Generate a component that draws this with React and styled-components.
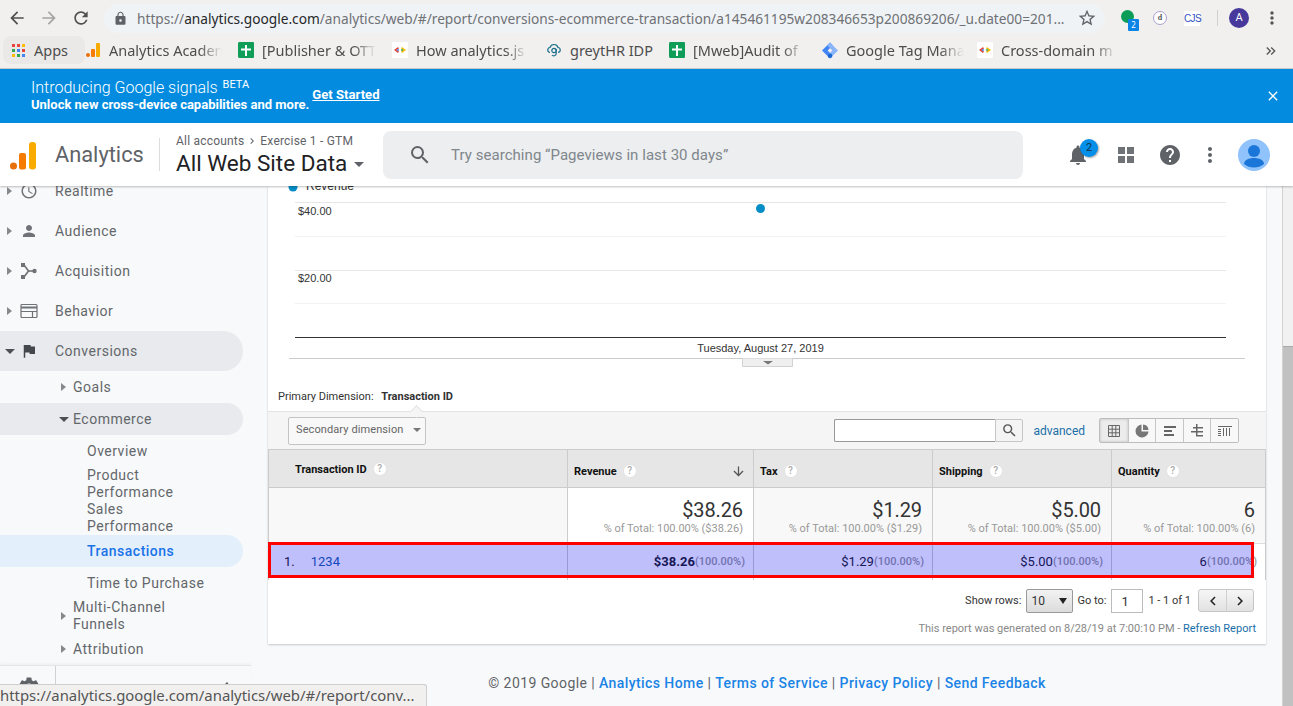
import React from 'react';
import styled, { createGlobalStyle } from 'styled-components';
import {
    MdArrowBack, MdArrowForward, MdRefresh, MdLock, MdStarBorder, MdSearch, MdClose,
    MdNotifications, MdHelp, MdMoreVert, MdAccessTime, MdPerson, MdFlag, MdSettings,
    MdChevronLeft, MdChevronRight, MdArrowDownward, MdKeyboardDoubleArrowRight
} from 'react-icons/md';

const GlobalStyle = createGlobalStyle`
    html, body {
        margin: 0;
        padding: 0;
        height: 100%;
        overflow: hidden;
        background: #f8f9fa;
        font-family: Roboto, "Liberation Sans", sans-serif;
    }
    * { box-sizing: border-box; }
`

const Page = styled.div`
    width: 1293px;
    height: 706px;
    display: flex;
    flex-direction: column;
    overflow: hidden;
    position: relative;
`

/* browser chrome */
const Chrome = styled.div`
    height: 69px;
    flex: none;
    background: #f1f0ef;
    border-bottom: 1px solid #c9c9c9;
    font-family: "Noto Sans", sans-serif;
`

const Toolbar = styled.div`
    height: 36px;
    display: flex;
    align-items: center;
    padding-left: 1px;
    color: #5a5a5a;
`

const NavButton = styled.div`
    width: 32px;
    display: flex;
    justify-content: center;
    font-size: 20px;
    color: ${({dim}) => dim ? '#a4a4a4' : '#505050'};
`

const Omnibox = styled.div`
    width: 1001px;
    height: 29px;
    margin-left: 7px;
    padding: 0 8px 0 9px;
    border-radius: 15px;
    background: #f0f3f5;
    display: flex;
    align-items: center;
    color: #5f6368;
    font-size: 13.7px;
    svg { flex: none; }
`

const Url = styled.span`
    margin-left: 9px;
    flex: 1;
    white-space: nowrap;
    color: #6e7175;
    b { font-weight: 400; color: #26282a; }
`

const Extensions = styled.div`
    display: flex;
    align-items: center;
    margin-left: 12px;
`

const ExtDot = styled.div`
    position: relative;
    width: 13px;
    height: 13px;
    border-radius: 50%;
    background: #0b9d58;
    margin: -3px 0 0 4px;
`

const ExtBadge = styled.span`
    position: absolute;
    left: 7px;
    top: 9px;
    width: 11px;
    height: 12px;
    border-radius: 1px;
    background: #0a84e6;
    color: #fff;
    font-size: 8px;
    line-height: 12px;
    text-align: center;
`

const ExtRing = styled.div`
    width: 14px;
    height: 14px;
    margin-left: 19px;
    border: 1px solid #a89fd0;
    border-radius: 50%;
    background: #fff;
    color: #555;
    font: bold 8px/12px "Liberation Serif", serif;
    text-align: center;
`

const ExtLabel = styled.div`
    width: 16px;
    margin-left: 17px;
    background: #fff;
    color: #3552c0;
    font: 10px/15px "Liberation Sans", sans-serif;
    letter-spacing: -0.6px;
    text-align: center;
`

const ToolbarDivider = styled.div`
    width: 1px;
    height: 16px;
    margin-left: 17px;
    background: #d0d0d0;
`

const ProfileBadge = styled.div`
    width: 20px;
    height: 20px;
    margin-left: 11px;
    border-radius: 50%;
    background: #47399b;
    color: #fff;
    font: 11px/20px Roboto, sans-serif;
    text-align: center;
`

const ChromeMenu = styled.div`
    margin-left: 13px;
    width: 20px;
    font-size: 20px;
    display: flex;
    color: #555;
`

const Bookmarks = styled.div`
    height: 32px;
    display: flex;
    align-items: center;
    padding: 0 0 5px 3px;
    position: relative;
    font-size: 14.5px;
    color: #4d4d4d;
`

const Bookmark = styled.div`
    width: ${({w}) => w}px;
    flex: none;
    display: flex;
    align-items: center;
    height: 28px;
    padding-left: ${({pad}) => pad || 0}px;
    border-radius: 8px;
    background: ${({active}) => active ? '#ebe9e8' : 'transparent'};
    overflow: hidden;
`

const BookmarkIcon = styled.span`
    width: 16px;
    height: 16px;
    flex: none;
    margin-right: 8px;
    display: flex;
`

const BookmarkText = styled.span`
    white-space: nowrap;
    overflow: hidden;
    width: ${({w}) => w ? w + 'px' : 'auto'};
    -webkit-mask-image: ${({w}) => w ? 'linear-gradient(to right, #000 80%, transparent)' : 'none'};
`

const MoreBookmarks = styled.div`
    position: absolute;
    right: 14px;
    top: 7px;
    font-size: 16px;
    display: flex;
    color: #555;
`

/* banner */
const Banner = styled.div`
    height: 54px;
    flex: none;
    background: #038cdf;
    color: #fff;
    display: flex;
    align-items: center;
    padding: 0 12px 0 31px;
`

const BannerText = styled.div`
    display: flex;
    flex-direction: column;
    margin-top: -3px;
`

const BannerTitle = styled.div`
    font-size: 16px;
    font-weight: 300;
    line-height: 19px;
    sup { font-size: 11px; font-weight: 400; line-height: 0; margin-left: 1px; vertical-align: 5px; }
`

const BannerSub = styled.div`
    font-size: 13px;
    font-weight: 700;
    line-height: 15px;
`

const BannerLink = styled.a`
    margin: 0 0 4px 3px;
    font-size: 13.100px;
    font-weight: 700;
    color: #fff;
    text-decoration: underline;
`

const BannerClose = styled.div`
    margin-left: auto;
    font-size: 16px;
    display: flex;
`

/* analytics header */
const Header = styled.div`
    height: 63px;
    flex: none;
    background: #fff;
    display: flex;
    align-items: center;
    position: relative;
    z-index: 2;
    box-shadow: 0 1px 2px rgba(0, 0, 0, .25);
`

const Logo = styled.svg`
    width: 28px;
    height: 32px;
    margin-left: 9px;
    flex: none;
`

const ProductName = styled.div`
    margin-left: 18px;
    width: 105px;
    padding-top: 1px;
    font-size: 21.800px;
    color: #5f6368;
    border-right: 1px solid #dadce0;
    line-height: 32px;
`

const Account = styled.div`
    margin-left: 16px;
    width: 207px;
    padding-top: 2px;
`

const Crumbs = styled.div`
    font-size: 12px;
    line-height: 14px;
    letter-spacing: 0.2px;
    color: #5f6368;
    display: flex;
    align-items: center;
    gap: 2px;
`

const ViewName = styled.div`
    font-size: 22.500px;
    line-height: 28px;
    margin-top: 1px;
    color: #202124;
    display: flex;
    align-items: center;
    white-space: nowrap;
    &::after {
        content: "";
        margin: 3px 0 0 7px;
        border: 5px solid transparent;
        border-top-color: #5f6368;
        border-bottom: 0;
    }
`

const SearchBox = styled.div`
    width: 640px;
    height: 48px;
    border-radius: 8px;
    background: #eceef0;
    display: flex;
    align-items: center;
    padding-left: 25px;
    color: #5f6368;
    font-size: 15px;
    letter-spacing: 0.05px;
    span { margin-left: 19px; color: #80868b; }
`

const HeaderIcons = styled.div`
    display: flex;
    align-items: center;
    margin-left: 43px;
    color: #5f6368;
`

const BellWrap = styled.div`
    position: relative;
    display: flex;
    font-size: 24px;
    width: 24px;
`

const BellBadge = styled.span`
    position: absolute;
    left: 14px;
    top: -4px;
    width: 18px;
    height: 18px;
    border-radius: 50%;
    background: #038ee8;
    color: #17324a;
    font-size: 11px;
    line-height: 18px;
    text-align: center;
    box-shadow: 1px 1px 2px rgba(0, 0, 0, .35);
`

const AppsGrid = styled.div`
    margin-left: 28px;
    display: grid;
    grid-template-columns: 7px 7px;
    gap: 2px;
    span { width: 7px; height: 7px; background: #6f7276; }
`

const HelpIcon = styled.div`
    margin-left: 24px;
    font-size: 24px;
    display: flex;
`

const MoreIcon = styled.div`
    margin-left: 16px;
    font-size: 24px;
    display: flex;
`

const Avatar = styled.svg`
    width: 32px;
    height: 32px;
    margin-left: 16px;
`

/* body */
const Body = styled.div`
    flex: 1;
    min-height: 0;
    display: flex;
`

const Sidebar = styled.div`
    width: 268px;
    flex: none;
    display: flex;
    flex-direction: column;
    background: #f8f9fa;
    font-size: 14px;
    font-weight: 400;
    letter-spacing: 0.5px;
    color: #63676b;
`

const NavList = styled.div`
    flex: 1;
    min-height: 0;
    width: 243px;
    margin-top: -15px;
`

const NavRow = styled.div`
    display: flex;
    align-items: center;
    height: ${({h}) => h}px;
    padding-left: ${({indent}) => indent}px;
    line-height: 17px;
    border-radius: 0 20px 20px 0;
    background: ${({selected, current}) => current ? '#e3effb' : selected ? '#e8eaed' : 'transparent'};
    color: ${({current}) => current ? '#1a73e8' : 'inherit'};
    font-weight: ${({current}) => current ? 500 : 400};
`

const Caret = styled.span`
    width: 0;
    height: 0;
    flex: none;
    margin-right: ${({gap}) => gap}px;
    border-style: solid;
    border-color: transparent;
    border-width: ${({open}) => open ? '5px 5px 0' : '4.5px 0 4.5px 5px'};
    border-top-color: ${({open}) => open ? '#4c4f53' : 'transparent'};
    border-left-color: ${({open}) => open ? 'transparent' : '#85888c'};
    margin-left: ${({open}) => open ? '-1px' : '0'};
`

const NavIcon = styled.span`
    width: 18px;
    height: 18px;
    margin-right: 17px;
    flex: none;
    display: flex;
    font-size: 20px;
    align-items: center;
    justify-content: center;
    color: ${({dark}) => dark ? '#44474b' : '#6f7377'};
`

const SidebarFoot = styled.div`
    height: 41px;
    flex: none;
    width: 251px;
    border-top: 1px solid #e4e6e8;
    box-shadow: 0 -2px 2px rgba(0, 0, 0, .03);
    display: flex;
    color: #5f6368;
`

const GearCell = styled.div`
    width: 56px;
    border-right: 1px solid #cfd1d4;
    display: flex;
    justify-content: center;
    padding: 9px 0 0 3px;
    font-size: 24px;
`

const CollapseCell = styled.div`
    margin-left: auto;
    padding: 10px 14px 0 0;
    font-size: 24px;
`

const Main = styled.div`
    flex: 1;
    min-width: 0;
    display: flex;
    flex-direction: column;
    background: #f8f9fa;
`

const Card = styled.div`
    width: 998px;
    height: 458px;
    flex: none;
    background: #fff;
    box-shadow: 0 1px 2px rgba(0, 0, 0, .2);
    display: flex;
    flex-direction: column;
    font-size: 11px;
`

const Chart = styled.svg`
    width: 998px;
    height: 181px;
    flex: none;
    display: block;
`

const DimensionBar = styled.div`
    height: 44px;
    flex: none;
    padding: 21px 0 0 10px;
    line-height: 18px;
    color: #333;
    b { font-weight: 700; margin-left: 5px; }
`

const ToolStrip = styled.div`
    height: 38px;
    flex: none;
    background: #f5f5f5;
    border-top: 1px solid #e3e3e3;
    display: flex;
    align-items: center;
    position: relative;
    padding-left: 20px;
    &::before {
        content: "";
        position: absolute;
        left: 144px;
        top: -5px;
        width: 8px;
        height: 8px;
        background: #f5f5f5;
        border-left: 1px solid #e3e3e3;
        border-top: 1px solid #e3e3e3;
        transform: rotate(45deg);
    }
`

const SecondaryButton = styled.div`
    width: 138px;
    height: 28px;
    border: 1px solid #c4c4c4;
    border-radius: 2px;
    background: #f8f8f8;
    color: #666;
    display: flex;
    align-items: center;
    padding: 0 0 2px 7px;
    letter-spacing: 0.1px;
    &::after {
        content: "";
        margin-left: 10px;
        border: 4px solid transparent;
        border-top: 4px solid #777;
        border-bottom: 0;
    }
`

const TableSearch = styled.div`
    margin-left: auto;
    display: flex;
    height: 23px;
`

const SearchInput = styled.div`
    width: 161px;
    background: #fff;
    border: 1px solid #999;
    border-right: 0;
    border-radius: 2px 0 0 2px;
`

const SearchButton = styled.div`
    width: 28px;
    background: #f4f4f4;
    border: 1px solid #c6c6c6;
    border-radius: 0 2px 2px 0;
    color: #555;
    display: flex;
    align-items: center;
    justify-content: center;
    font-size: 17px;
`

const AdvancedLink = styled.a`
    margin: 0 14px 0 10px;
    font-size: 12px;
    color: #1a6fa8;
`

const ViewSwitch = styled.div`
    display: flex;
    height: 25px;
    margin-right: 27px;
    border: 1px solid #bdbdbd;
    border-radius: 2px;
`

const ViewButton = styled.div`
    width: 27.600px;
    display: flex;
    align-items: center;
    justify-content: center;
    color: #666;
    background: ${({on}) => on ? '#ececec' : '#f8f8f8'};
    box-shadow: ${({on}) => on ? 'inset 0 0 3px rgba(0,0,0,.2)' : 'none'};
    & + & { border-left: 1px solid #c6c6c6; }
`

const Table = styled.div`
    position: relative;
    display: grid;
    grid-template-columns: 298px 186px 179px 179px 154px;
    grid-template-rows: 39px 56px 36px;
    width: 998px;
    border-right: 1px solid #ccc;
    border-left: 1px solid #ccc;
    flex: none;
`

const HeadCell = styled.div`
    background: #e6e6e6;
    border-top: 1px solid #ccc;
    border-bottom: 1px solid #ccc;
    border-left: ${({first}) => first ? '0' : '1px solid #ccc'};
    display: flex;
    align-items: center;
    padding: ${({first}) => first ? '1px 0 0 26px' : '5px 7px 0 6px'};
    font-weight: 700;
    color: #111;
`

const HelpDot = styled.span`
    width: 14px;
    height: 14px;
    margin-left: 6px;
    border-radius: 50%;
    background: #fff;
    border: 1px solid #e3e3e3;
    color: #aaa;
    font-size: 10px;
    line-height: 12px;
    text-align: center;
    font-weight: 500;
`

const SortArrow = styled.span`
    margin-left: auto;
    display: flex;
    font-size: 15px;
    color: #555;
`

const TotalCell = styled.div`
    background: ${({plain}) => plain ? '#fff' : '#f8f8f8'};
    border-left: ${({first}) => first ? '0' : '1px solid #ccc'};
    border-bottom: 1px solid #ddd;
    text-align: right;
    padding: 10px 10px 0 0;
    color: #999;
    font-size: 11px;
    line-height: 12px;
    white-space: nowrap;
`

const TotalValue = styled.div`
    font-size: 20px;
    line-height: 25px;
    color: #333;
    letter-spacing: -0.1px;
`

const DataCell = styled.div`
    border-left: ${({first}) => first ? '0' : '1px solid #ccc'};
    display: flex;
    align-items: center;
    justify-content: ${({first}) => first ? 'flex-start' : 'flex-end'};
    padding: ${({first}) => first ? '0 0 2px 15px' : '0 8px 2px 0'};
    font-size: 13px;
    color: #222;
    font-weight: ${({strong}) => strong ? 700 : 400};
    white-space: nowrap;
    span { font-size: 11px; font-weight: 500; color: #999; }
    a { margin-left: 16px; color: #1a5fa8; }
`

const RedBox = styled.div`
    position: absolute;
    left: -1px;
    top: 93px;
    width: 986px;
    height: 36px;
    border: 3px solid #fe0000;
    background: rgba(0, 0, 240, .25);
`

const Pagination = styled.div`
    display: flex;
    align-items: center;
    justify-content: flex-end;
    height: 27px;
    margin-top: 7px;
    padding-right: 12px;
    color: #333;
`

const RowSelect = styled.div`
    width: 47px;
    height: 24px;
    margin: 0 4px 0 5px;
    border: 1px solid #999;
    border-radius: 2px;
    background: linear-gradient(#f2f2f2, #dcdcdc);
    display: flex;
    align-items: center;
    justify-content: space-between;
    padding: 0 5px 0 4px;
    font-size: 12px;
    &::after {
        content: "";
        border: 4px solid transparent;
        border-top: 6px solid #222;
        border-bottom: 0;
    }
`

const PageInput = styled.div`
    width: 32px;
    height: 24px;
    margin: 0 5px 0 5px;
    border: 1px solid #bbb;
    background: #fff;
    padding-left: 9px;
    font-size: 13px;
    line-height: 24px;
`

const PageButtons = styled.div`
    display: flex;
    height: 23px;
    margin-left: 7px;
    border: 1px solid #c6c6c6;
    border-radius: 3px;
    background: linear-gradient(#f6f6f6, #e2e2e2);
    color: #222;
`

const PageButton = styled.div`
    width: 27px;
    display: flex;
    align-items: center;
    justify-content: center;
    font-size: 18px;
    & + & { border-left: 1px solid #d0d0d0; }
`

const Generated = styled.div`
    margin-top: 8px;
    padding-right: 10px;
    text-align: right;
    color: #888;
    font-size: 11px;
    a { color: #1a6fa8; }
`

const Footer = styled.div`
    width: 998px;
    margin-top: 29px;
    text-align: center;
    font-size: 14px;
    letter-spacing: 0.42px;
    line-height: 20px;
    color: #5f6368;
    a { color: #1a84e6; font-weight: 500; }
`

const ScrollTrack = styled.div`
    width: 11px;
    margin-left: auto;
    flex: none;
    background: #f1f1f1;
    border-left: 1px solid #d2d2d2;
    display: flex;
    flex-direction: column;
`

const ScrollThumb = styled.div`
    margin-top: 160px;
    flex: 1;
    background: #c1c1c1;
    border-top: 1px solid #a9a9a9;
`

const StatusBubble = styled.div`
    position: absolute;
    left: 0;
    bottom: 0;
    width: 427px;
    height: 22px;
    z-index: 3;
    background: #f1f0ef;
    border-top: 1px solid #cfcfcf;
    border-right: 1px solid #cfcfcf;
    border-radius: 0 3px 0 0;
    font-family: "Noto Sans", sans-serif;
    font-size: 14.900px;
    line-height: 21px;
    color: #555;
    white-space: nowrap;
    overflow: hidden;
`

const GridDot = () => (
    <svg width="16" height="16" viewBox="0 0 16 16">
        {[0, 1, 2].map(r => [0, 1, 2].map(c => (
            <rect key={`${r}${c}`} x={2 + c * 5} y={2 + r * 5} width="3" height="3"
                fill={[['#e8453c', '#e8453c', '#fbbc05'], ['#34a853', '#4285f4', '#e8453c'], ['#fbbc05', '#34a853', '#4285f4']][r][c]} />
        )))}
    </svg>
);

const GaMini = () => (
    <svg width="16" height="16" viewBox="0 0 16 16">
        <circle cx="3" cy="13" r="2" fill="#e8710a" />
        <rect x="6" y="7" width="4" height="8" rx="1" fill="#f57c00" />
        <rect x="11" y="1" width="4" height="14" rx="1" fill="#f9ab00" />
    </svg>
);

const SheetIcon = () => (
    <svg width="16" height="16" viewBox="0 0 16 16">
        <rect width="16" height="16" rx="1" fill="#0f9d58" />
        <path d="M7 3h2v3.500h4v2H9V14H7V8.500H3v-2h4z" fill="#fff" />
    </svg>
);

const CodeIcon = () => (
    <svg width="16" height="16" viewBox="0 0 16 16">
        <rect width="16" height="16" rx="1" fill="#fff" />
        <path d="M6 5L2 8l4 3 1-1.500L4.500 8 7 6.500z" fill="#ea4335" />
        <path d="M10 5l4 3-4 3-1-1.500L11.500 8 9 6.500z" fill="#fbbc05" />
        <path d="M4.500 8L6 6.800 7.200 8 6 9.200z" fill="#4285f4" />
        <path d="M11.500 8L10 9.200 8.800 8 10 6.800z" fill="#34a853" />
    </svg>
);

const CloudG = () => (
    <svg width="16" height="16" viewBox="0 0 16 16" fill="none" stroke="#1d6f8c" strokeWidth="1.200">
        <path d="M4 10.500C1 10 1 6 4 5.500 5 1.500 11 1.500 12 5.500c3 .5 3 4.500 0 5" />
        <circle cx="8" cy="8.500" r="2.200" />
        <path d="M10.200 7v4.500C10.200 14 7 14.500 6 13" />
    </svg>
);

const TagIcon = () => (
    <svg width="17" height="17" viewBox="0 0 17 17">
        <path d="M8.500 0l3 3-5.500 5.500 5.500 5.500-3 3L0 8.500z" fill="#4285f4" />
        <path d="M8.500 0L17 8.500 8.500 17l-3-3L11 8.500 5.500 3z" fill="#8ab4f8" />
        <circle cx="8.500" cy="14" r="2.400" fill="#1967d2" />
    </svg>
);

const AcquisitionIcon = () => (
    <svg width="18" height="18" viewBox="0 0 18 18" fill="#6f7377">
        <rect x="1" y="1" width="4" height="4" />
        <rect x="1" y="13" width="4" height="4" />
        <circle cx="14.500" cy="9" r="2.200" />
        <path d="M4 3l4.500 6L4 15" fill="none" stroke="#6f7377" strokeWidth="1.600" />
        <path d="M8 9h5" stroke="#6f7377" strokeWidth="1.600" />
    </svg>
);

const BehaviorIcon = () => (
    <svg width="18" height="16" viewBox="0 0 18 16" fill="none" stroke="#6f7377" strokeWidth="1.200">
        <rect x="1" y="1.500" width="16" height="13" rx="1" />
        <path d="M1 4.500h16" strokeWidth="2" />
        <path d="M1 8.500h16M12.500 8.500v6" />
    </svg>
);

const ViewIcon = ({kind}) => {
    const stroke = {fill: 'none', stroke: '#666', strokeWidth: 1};
    return (
        <svg width="16" height="16" viewBox="0 0 16 16">
            {kind === 'table' && <path {...stroke} d="M2.500 2.500h11v11h-11zM2.500 6.200h11M2.500 9.800h11M6.200 2.500v11M9.800 2.500v11" />}
            {kind === 'pie' && <path fill="#777" d="M7.500 1.500a6.500 6.500 0 1 0 7 7h-7zM9 1.500V7h5.500A6 6 0 0 0 9 1.500z" />}
            {kind === 'bars' && <path fill="#666" d="M2 3h12v2H2zM2 7h8v2H2zM2 11h10v2H2z" />}
            {kind === 'pivot' && <path fill="#666" d="M7 1h1.500v3H14v1.500H8.500V8H14v1.500H8.500V12H14v1.500H7v-4H2V8h5V5.500H4V4h3z" />}
            {kind === 'comparison' && <path fill="#666" d="M1 3h14v1H1zM1 6h3v1H1zM1 8h3v1H1zM1 10h3v1H1zM1 12h3v1H1zM6 5h1v8H6zM9 5h1v8H9zM12 5h1v8h-1z" />}
        </svg>
    );
};

const bookmarks = [
    {label: 'Analytics Acaden', icon: <GaMini />, w: 153, tw: 113},
    {label: '[Publisher & OTT', icon: <SheetIcon />, w: 154, tw: 114},
    {label: 'How analytics.js', icon: <CodeIcon />, w: 154, tw: 112},
    {label: 'greytHR IDP', icon: <CloudG />, w: 123},
    {label: '[Mweb]Audit of', icon: <SheetIcon />, w: 153, tw: 112},
    {label: 'Google Tag Mana', icon: <TagIcon />, w: 155, tw: 118},
    {label: 'Cross-domain m', icon: <CodeIcon />, w: 150, tw: 116},
];

const columns = [
    {title: 'Revenue', total: '$38.26', of: '$38.26', value: '$38.26', strong: true, plain: true, sort: true},
    {title: 'Tax', total: '$1.29', of: '$1.29', value: '$1.29'},
    {title: 'Shipping', total: '$5.00', of: '$5.00', value: '$5.00'},
    {title: 'Quantity', total: '6', of: '6', value: '6'},
];

const App = () => {
    return (
        <Page>
            <GlobalStyle />
            <Chrome>
                <Toolbar>
                    <NavButton><MdArrowBack /></NavButton>
                    <NavButton dim><MdArrowForward /></NavButton>
                    <NavButton><MdRefresh /></NavButton>
                    <Omnibox>
                        <MdLock size={15} />
                        <Url>https://<b>analytics.google.com</b>/analytics/web/#/report/conversions-ecommerce-transaction/a145461195w208346653p200869206/_u.date00=201...</Url>
                        <MdStarBorder size={20} />
                    </Omnibox>
                    <Extensions>
                        <ExtDot><ExtBadge>2</ExtBadge></ExtDot>
                        <ExtRing>d</ExtRing>
                        <ExtLabel>CJS</ExtLabel>
                        <ToolbarDivider />
                        <ProfileBadge>A</ProfileBadge>
                        <ChromeMenu><MdMoreVert /></ChromeMenu>
                    </Extensions>
                </Toolbar>
                <Bookmarks>
                    <Bookmark w={82} pad={7} active>
                        <BookmarkIcon><GridDot /></BookmarkIcon>
                        <BookmarkText>Apps</BookmarkText>
                    </Bookmark>
                    {bookmarks.map((item, key) => (
                        <Bookmark key={key} w={item.w}>
                            <BookmarkIcon>{item.icon}</BookmarkIcon>
                            <BookmarkText w={item.tw}>{item.label}</BookmarkText>
                        </Bookmark>
                    ))}
                    <MoreBookmarks><MdKeyboardDoubleArrowRight /></MoreBookmarks>
                </Bookmarks>
            </Chrome>

            <Banner>
                <BannerText>
                    <BannerTitle>Introducing Google signals <sup>BETA</sup></BannerTitle>
                    <BannerSub>Unlock new cross-device capabilities and more.</BannerSub>
                </BannerText>
                <BannerLink>Get Started</BannerLink>
                <BannerClose><MdClose /></BannerClose>
            </Banner>

            <Header>
                <Logo viewBox="0 0 28 32">
                    <circle cx="4.500" cy="27" r="3.500" fill="#e8710a" />
                    <rect x="10" y="14" width="7" height="16.500" rx="2" fill="#f57c00" />
                    <rect x="20" y="3" width="7" height="27.500" rx="3" fill="#f9ab00" />
                </Logo>
                <ProductName>Analytics</ProductName>
                <Account>
                    <Crumbs>All accounts <MdChevronRight size={12} /> Exercise 1 - GTM</Crumbs>
                    <ViewName>All Web Site Data</ViewName>
                </Account>
                <SearchBox>
                    <MdSearch size={24} />
                    <span>Try searching “Pageviews in last 30 days”</span>
                </SearchBox>
                <HeaderIcons>
                    <BellWrap>
                        <MdNotifications />
                        <BellBadge>2</BellBadge>
                    </BellWrap>
                    <AppsGrid><span /><span /><span /><span /></AppsGrid>
                    <HelpIcon><MdHelp /></HelpIcon>
                    <MoreIcon><MdMoreVert /></MoreIcon>
                    <Avatar viewBox="0 0 32 32">
                        <circle cx="16" cy="16" r="16" fill="#90c2fb" />
                        <circle cx="16" cy="12" r="6" fill="#1a76d8" />
                        <path d="M6 25c0-4 5-6 10-6s10 2 10 6a16 16 0 0 1-20 0z" fill="#1a76d8" />
                    </Avatar>
                </HeaderIcons>
            </Header>

            <Body>
                <Sidebar>
                    <NavList>
                        <NavRow h={40} indent={7}>
                            <Caret gap={8} /><NavIcon><MdAccessTime /></NavIcon>Realtime
                        </NavRow>
                        <NavRow h={40} indent={7}>
                            <Caret gap={8} /><NavIcon><MdPerson /></NavIcon>Audience
                        </NavRow>
                        <NavRow h={40} indent={7}>
                            <Caret gap={8} /><NavIcon><AcquisitionIcon /></NavIcon>Acquisition
                        </NavRow>
                        <NavRow h={40} indent={7}>
                            <Caret gap={8} /><NavIcon><BehaviorIcon /></NavIcon>Behavior
                        </NavRow>
                        <NavRow h={40} indent={6} selected>
                            <Caret gap={5} open /><NavIcon dark><MdFlag /></NavIcon>Conversions
                        </NavRow>
                        <NavRow h={32} indent={61}>
                            <Caret gap={7} />Goals
                        </NavRow>
                        <NavRow h={32} indent={60} selected>
                            <Caret gap={4} open />Ecommerce
                        </NavRow>
                        <NavRow h={32} indent={87}>Overview</NavRow>
                        <NavRow h={34} indent={87}>Product<br />Performance</NavRow>
                        <NavRow h={34} indent={87}>Sales<br />Performance</NavRow>
                        <NavRow h={32} indent={87} current>Transactions</NavRow>
                        <NavRow h={32} indent={87}>Time to Purchase</NavRow>
                        <NavRow h={34} indent={61}>
                            <Caret gap={7} /><span>Multi-Channel<br />Funnels</span>
                        </NavRow>
                        <NavRow h={32} indent={61}>
                            <Caret gap={7} />Attribution
                        </NavRow>
                    </NavList>
                    <SidebarFoot>
                        <GearCell><MdSettings /></GearCell>
                        <CollapseCell><MdChevronLeft /></CollapseCell>
                    </SidebarFoot>
                </Sidebar>

                <Main>
                    <Card>
                        <Chart viewBox="0 0 998 181">
                            <circle cx="25" cy="1" r="4.500" fill="#058dc7" />
                            <text x="38" y="4" fontSize="12" fill="#333" fontFamily="Liberation Sans">Revenue</text>
                            {[16.500, 84.500].map(y => <path key={y} d={`M27 ${y}H958`} stroke="#e6e6e6" />)}
                            {[50.500, 117.500].map(y => <path key={y} d={`M27 ${y}H958`} stroke="#f2f2f2" />)}
                            <text x="30" y="29" fontSize="11" fill="#333" fontFamily="Liberation Sans">$40.00</text>
                            <text x="30" y="96" fontSize="11" fill="#333" fontFamily="Liberation Sans">$20.00</text>
                            <circle cx="492.500" cy="22.500" r="4.500" fill="#058dc7" />
                            <path d="M27 151.500H958" stroke="#333" />
                            <text x="492.500" y="166" textAnchor="middle" fontSize="11" fill="#333" fontFamily="Liberation Sans">Tuesday, August 27, 2019</text>
                            <path d="M21 172.500H977" stroke="#ccc" />
                            <path d="M474.500 172.500v8h50v-8" fill="#efefef" stroke="#d2d2d2" />
                            <path d="M495 175h10l-5 3.500z" fill="#777" />
                        </Chart>
                        <DimensionBar>Primary Dimension: <b>Transaction ID</b></DimensionBar>
                        <ToolStrip>
                            <SecondaryButton>Secondary dimension</SecondaryButton>
                            <TableSearch>
                                <SearchInput />
                                <SearchButton><MdSearch /></SearchButton>
                            </TableSearch>
                            <AdvancedLink>advanced</AdvancedLink>
                            <ViewSwitch>
                                <ViewButton on><ViewIcon kind="table" /></ViewButton>
                                <ViewButton><ViewIcon kind="pie" /></ViewButton>
                                <ViewButton><ViewIcon kind="bars" /></ViewButton>
                                <ViewButton><ViewIcon kind="pivot" /></ViewButton>
                                <ViewButton><ViewIcon kind="comparison" /></ViewButton>
                            </ViewSwitch>
                        </ToolStrip>
                        <Table>
                            <HeadCell first>Transaction ID<HelpDot>?</HelpDot></HeadCell>
                            {columns.map(col => (
                                <HeadCell key={col.title}>
                                    {col.title}<HelpDot>?</HelpDot>
                                    {col.sort && <SortArrow><MdArrowDownward /></SortArrow>}
                                </HeadCell>
                            ))}
                            <TotalCell first />
                            {columns.map(col => (
                                <TotalCell key={col.title} plain={col.plain}>
                                    <TotalValue>{col.total}</TotalValue>
                                    % of Total: 100.00% ({col.of})
                                </TotalCell>
                            ))}
                            <DataCell first>1.<a>1234</a></DataCell>
                            {columns.map(col => (
                                <DataCell key={col.title} strong={col.strong}>
                                    {col.value}<span>(100.00%)</span>
                                </DataCell>
                            ))}
                            <RedBox />
                        </Table>
                        <Pagination>
                            Show rows:
                            <RowSelect>10</RowSelect>
                            Go to:
                            <PageInput>1</PageInput>
                            1 - 1 of 1
                            <PageButtons>
                                <PageButton><MdChevronLeft /></PageButton>
                                <PageButton><MdChevronRight /></PageButton>
                            </PageButtons>
                        </Pagination>
                        <Generated>This report was generated on 8/28/19 at 7:00:10 PM - <a>Refresh Report</a></Generated>
                    </Card>
                    <Footer>© 2019 Google | <a>Analytics Home</a> | <a>Terms of Service</a> | <a>Privacy Policy</a> | <a>Send Feedback</a></Footer>
                </Main>
                <ScrollTrack><ScrollThumb /></ScrollTrack>
            </Body>
            <StatusBubble>https://analytics.google.com/analytics/web/#/report/conv...</StatusBubble>
        </Page>
    );
};

export default App;
